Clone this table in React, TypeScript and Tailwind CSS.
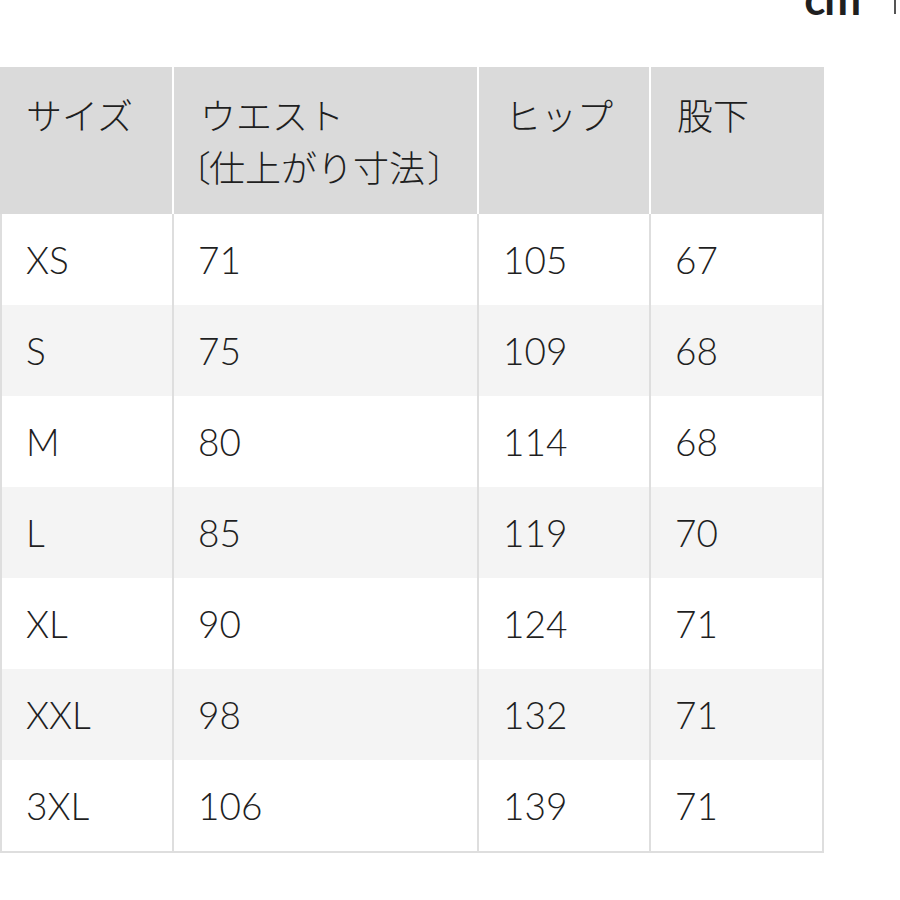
import React from 'react';

const rows: [string, string, string, string][] = [
  ['XS', '71', '105', '67'],
  ['S', '75', '109', '68'],
  ['M', '80', '114', '68'],
  ['L', '85', '119', '70'],
  ['XL', '90', '124', '71'],
  ['XXL', '98', '132', '71'],
  ['3XL', '106', '139', '71'],
];

const cols = 'grid grid-cols-[174px_305px_172px_173px]';
const font = { fontFamily: 'Lato, "Noto Sans CJK JP", sans-serif' };

export default function App() {
  return (
    <div className="min-h-[900px] w-[900px] bg-white text-[#1f1f1f]" style={font}>
      {/* unit switch, cut off at top */}
      <div className="flex h-[67px] items-start justify-end pr-[4px]">
        <span className="-mt-[24px] text-[44px] font-bold leading-none tracking-tight">cm</span>
        <span className="-mt-[2px] ml-[34px] h-[16px] w-[2px] bg-[#555]" />
      </div>

      <div className="w-[824px]">
        <div className={`${cols} h-[147px] bg-[#dadada] text-[36px] font-light leading-[52px]`}>
          <div className="border-r-2 border-white pl-[26px] pt-[23px]">サイズ</div>
          <div className="border-r-2 border-white pl-[26px] pt-[23px]">
            ウエスト
            <br />
            <span className="-ml-[25px] -mr-[2px]">〔</span>仕上がり寸法<span className="ml-[2px]">〕</span>
          </div>
          <div className="border-r-2 border-white pl-[26px] pt-[23px]">ヒップ</div>
          <div className="pl-[26px] pt-[23px]">股下</div>
        </div>

        <div className="border-x-2 border-b-2 border-[#dedede]">
          {rows.map((r, i) => (
            <div
              key={r[0]}
              className={`grid grid-cols-[172px_305px_172px_171px] h-[91px] text-[37px] font-light ${
                i % 2 === 1 ? 'bg-[#f4f4f4]' : 'bg-white'
              }`}
            >
              {r.map((v, j) => (
                <div
                  key={j}
                  className={`flex items-center pl-[24px] ${j < 3 ? 'border-r-2 border-[#dedede]' : ''}`}
                >
                  {v}
                </div>
              ))}
            </div>
          ))}
        </div>
      </div>
    </div>
  );
}
